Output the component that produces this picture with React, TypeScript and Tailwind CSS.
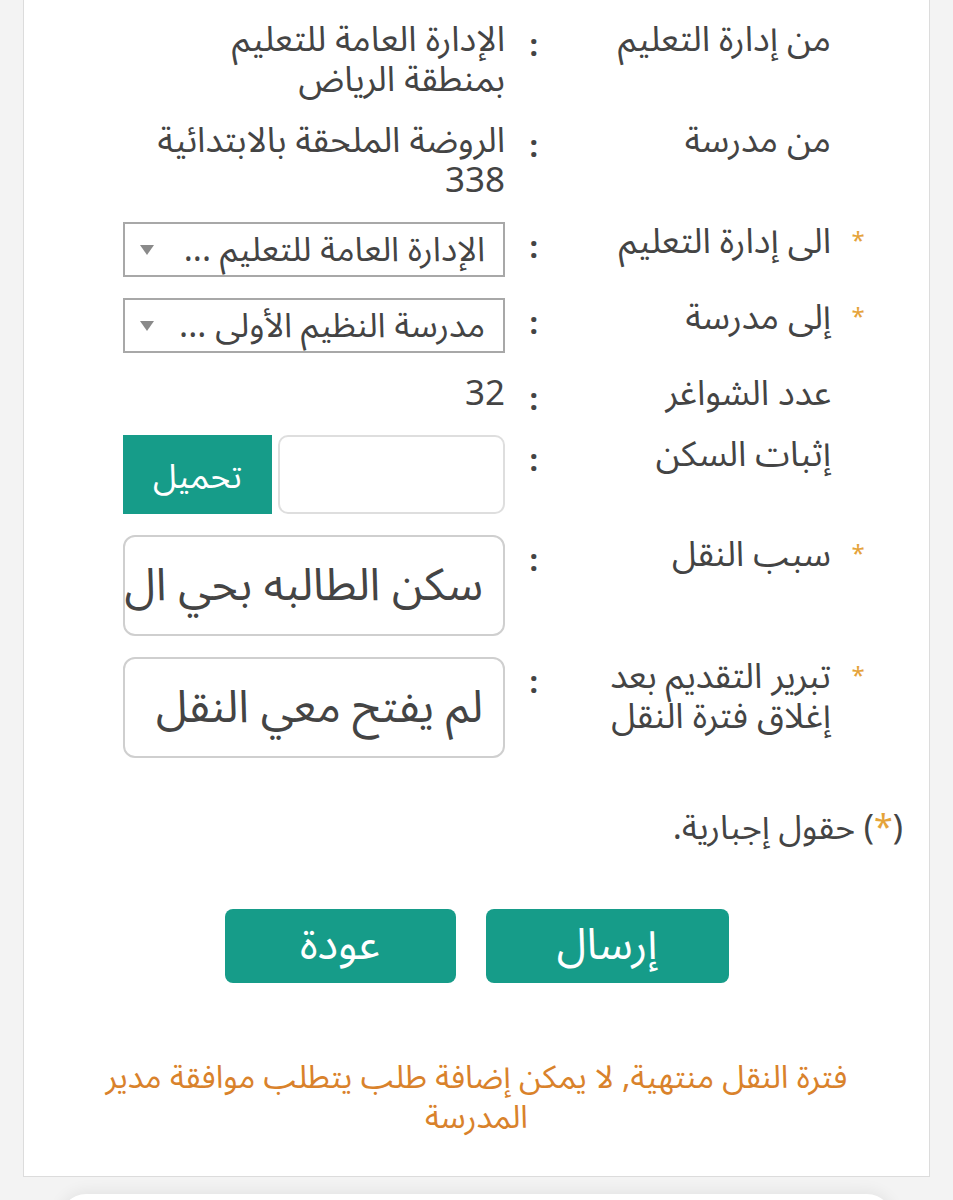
import React from 'react';

const FONT = "font-['Noto_Sans_Arabic','Noto_Sans','DejaVu_Sans',sans-serif]";

const Star = () => <span className="text-[#e5a33a] text-[24px] leading-[40px]">*</span>;

const Colon = () => (
  <div className="h-[40px] pr-[13px] text-[30px] leading-[54px] font-bold text-[#444]">:</div>
);

interface RowProps {
  label: React.ReactNode;
  required?: boolean;
  children: React.ReactNode;
}

const Row: React.FC<RowProps> = ({ label, required, children }) => (
  <>
    <div className="flex justify-center">{required && <Star />}</div>
    <div className="text-[35px] leading-[40px] text-[#444]">{label}</div>
    <Colon />
    <div>{children}</div>
  </>
);

const SelectBox: React.FC<{ value: string }> = ({ value }) => (
  <div className="h-[55px] border-2 border-[#a8a8a8] flex items-center justify-between pr-[18px] pl-[14px]">
    <span className="text-[34px] leading-[40px] text-[#444] whitespace-nowrap">{value}</span>
    <svg width="16" height="12" viewBox="0 0 16 12" className="text-[#8a8a8a] shrink-0">
      <path d="M1 1h14L8 11z" fill="currentColor" />
    </svg>
  </div>
);

const TextBox: React.FC<{ value: string }> = ({ value }) => (
  <div className="h-[101px] border-2 border-[#cfcfcf] rounded-[12px] flex items-center pr-[20px] pl-[6px]">
    <div className="whitespace-nowrap text-[45px] leading-[72px] text-[#444]">{value}</div>
  </div>
);

export default function App() {
  return (
    <div dir="rtl" className={`${FONT} bg-[#f3f3f3] min-h-[1200px] overflow-hidden`}>
      <div className="mx-[23px] bg-white border-x border-b border-[#dcdcdc] pt-[20px] pb-[38px]">
        <div className="grid grid-cols-[54px_280px_46px_382px] gap-y-[21px] mr-[44px]">
          <Row label="من إدارة التعليم">
            <div className="text-[35px] leading-[40px] text-[#444]">
              الإدارة العامة للتعليم
              <br />
              بمنطقة الرياض
            </div>
          </Row>
          <Row label="من مدرسة">
            <div className="text-[35px] leading-[40px] text-[#444]">
              الروضة الملحقة بالابتدائية
              <br />
              338
            </div>
          </Row>
          <Row label="الى إدارة التعليم" required>
            <SelectBox value="الإدارة العامة للتعليم ..." />
          </Row>
          <Row label="إلى مدرسة" required>
            <SelectBox value="مدرسة النظيم الأولى ..." />
          </Row>
          <Row label="عدد الشواغر">
            <div className="text-[35px] leading-[40px] text-[#444]">32</div>
          </Row>
          <Row label="إثبات السكن">
            <div className="flex gap-[6px]">
              <div className="w-[227px] h-[79px] border-2 border-[#dedede] rounded-[10px]" />
              <button className="w-[149px] h-[79px] bg-[#169c89] text-white text-[34px] leading-[40px] pt-[4px]">
                تحميل
              </button>
            </div>
          </Row>
          <Row label="سبب النقل" required>
            <TextBox value="سكن الطالبه بحي ال" />
          </Row>
          <Row
            label={
              <>
                تبرير التقديم بعد
                <br />
                إغلاق فترة النقل
              </>
            }
            required
          >
            <TextBox value="لم يفتح معي النقل" />
          </Row>
        </div>

        <p className="mt-[50px] mr-[26px] text-[34px] leading-[40px] text-[#444]">
          (<span className="text-[#e5a33a]">*</span>) حقول إجبارية.
        </p>

        <div className="mt-[61px] flex justify-center gap-[30px]">
          <button className="w-[243px] h-[74px] rounded-[8px] bg-[#169c89] text-white text-[43px] leading-[50px]">
            إرسال
          </button>
          <button className="w-[231px] h-[74px] rounded-[8px] bg-[#169c89] text-white text-[43px] leading-[50px]">
            عودة
          </button>
        </div>

        <p className="mt-[75px] px-[60px] text-center text-[32px] leading-[40px] text-[#d9822b]">
          فترة النقل منتهية, لا يمكن إضافة طلب يتطلب موافقة مدير المدرسة
        </p>
      </div>

      <div className="mt-[17px] mx-[60px] h-[40px] bg-white rounded-t-[26px] shadow-[0_-2px_16px_rgba(0,0,0,0.07)]" />
    </div>
  );
}
